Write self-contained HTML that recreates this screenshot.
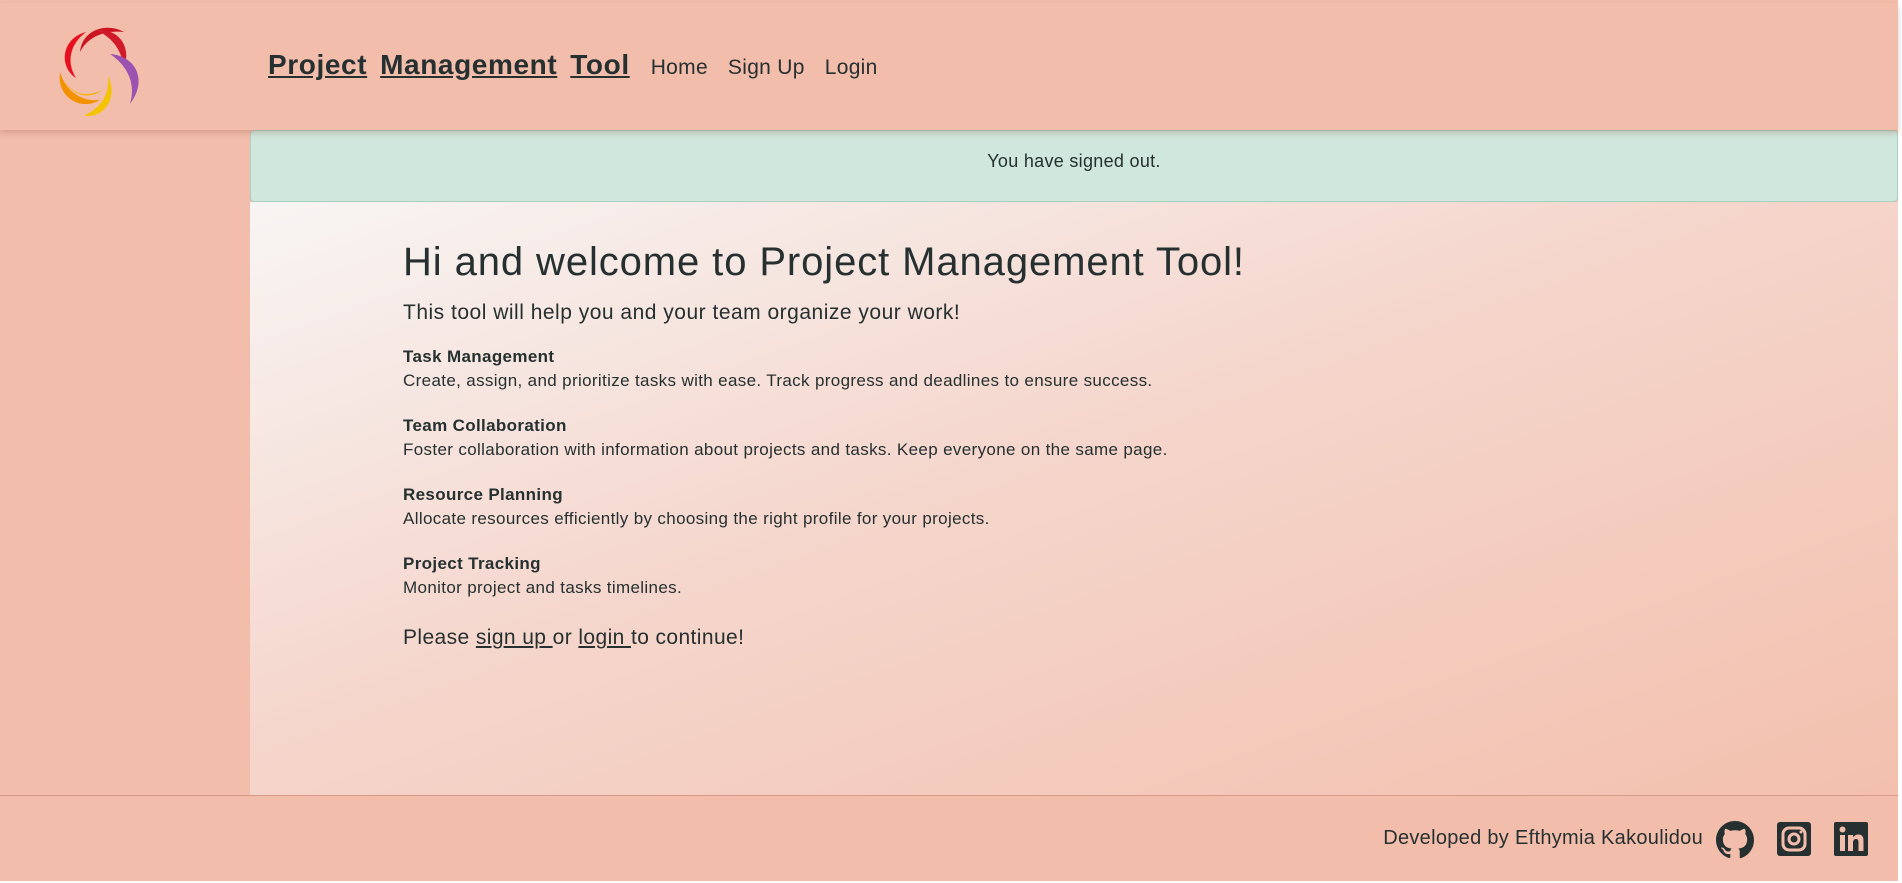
<!DOCTYPE html>
<html><head><meta charset="utf-8"><style>
*{margin:0;padding:0;box-sizing:border-box}
body{width:1902px;height:883px;background:#fff;font-family:"Liberation Sans",sans-serif;color:#263030;position:relative;overflow:hidden}
.page{position:absolute;left:0;top:0;width:1898px;height:881px;background:#f3bdab}
header{position:absolute;left:0;top:3px;width:1898px;height:127px;background:#f3bdab;box-shadow:0 3px 6px rgba(150,90,70,.3);z-index:2}
.nav{position:absolute;top:46px;left:268px;display:flex;align-items:baseline}
.nav a{color:#263030}
.t{font-size:28px;font-weight:bold;text-decoration:underline;margin-right:13px;letter-spacing:.6px}
.l{font-size:21px;margin-left:8px;margin-right:12px;text-decoration:none;letter-spacing:.3px}
.alert{position:absolute;left:250px;top:130px;width:1648px;height:72px;background:#d0e7dd;border:1px solid #a9d0bf;border-radius:4px;text-align:center;line-height:60px;font-size:18px;letter-spacing:.3px}
.main{position:absolute;left:250px;top:202px;width:1648px;height:593px;background:linear-gradient(160deg,#f8f5f4 0%,#f5d6cc 45%,#f3c0ae 100%)}
.c{position:absolute;left:153px;top:38px;letter-spacing:.35px}
h1{font-size:40px;font-weight:normal;margin-bottom:16px;letter-spacing:.9px}
.sub{font-size:21px;margin-bottom:20px;letter-spacing:.5px}
.g{margin-bottom:21px;font-size:17px;line-height:24px}
.g b{font-size:17px}
.please{font-size:21px;margin-top:26px;letter-spacing:.4px}
.please a{color:#263030;text-decoration:underline}
footer{position:absolute;left:0;top:795px;width:1898px;height:86px;border-top:1px solid #d89a88;background:#f3bdab}
.ft{position:absolute;right:195px;top:31px;font-size:20px;letter-spacing:.3px}
.ic{position:absolute;top:25px}
</style></head><body><div class="page">
<header>
<svg style="position:absolute;left:56px;top:21px" width="92" height="92" viewBox="0 0 92 92">
<path d="M30 8 C6 14 2 42 20 54 C10 38 14 20 30 8Z" fill="#e8101f"/>
<path d="M68 8 C50 -2 26 6 24 28 C32 12 50 6 68 8Z" fill="#cc1420"/>
<path d="M40 6 C62 4 76 22 68 44 C66 28 58 14 40 6Z" fill="#d01a2a"/>
<path d="M54 30 C80 32 92 56 74 80 C80 60 72 42 54 30Z" fill="#9b52b0"/>
<path d="M4 48 C0 72 24 88 44 76 C26 78 10 68 4 48Z" fill="#f39200"/>
<path d="M52 52 C62 72 50 94 28 92 C44 84 54 72 52 52Z" fill="#f5c400"/>
<path d="M8 56 C16 72 34 76 46 66 C30 74 16 70 8 56Z" fill="#f7b300"/>
</svg>
<div class="nav"><a class="t">Project</a><a class="t">Management</a><a class="t">Tool</a><a class="l">Home</a><a class="l">Sign Up</a><a class="l">Login</a></div>
</header>
<div class="alert">You have signed out.</div>
<div class="main"><div class="c">
<h1>Hi and welcome to Project Management Tool!</h1>
<div class="sub">This tool will help you and your team organize your work!</div>
<div class="g"><b>Task Management</b><br>Create, assign, and prioritize tasks with ease. Track progress and deadlines to ensure success.</div>
<div class="g"><b>Team Collaboration</b><br>Foster collaboration with information about projects and tasks. Keep everyone on the same page.</div>
<div class="g"><b>Resource Planning</b><br>Allocate resources efficiently by choosing the right profile for your projects.</div>
<div class="g"><b>Project Tracking</b><br>Monitor project and tasks timelines.</div>
<div class="please">Please <a>sign up </a>or <a>login </a>to continue!</div>
</div></div>
<footer>
<div class="ft">Developed by Efthymia Kakoulidou</div>
<svg class="ic" style="left:1716px" width="38" height="38" viewBox="0 0 16 16"><path fill="#263030" d="M8 0C3.58 0 0 3.58 0 8c0 3.54 2.29 6.53 5.470 7.59.4.07.55-.17.55-.38v-1.33c-2.23.48-2.7-1.07-2.7-1.07-.36-.92-.89-1.170-.89-1.17-.73-.5.06-.49.06-.49.8.06 1.23.83 1.23.83.71 1.22 1.87.87 2.33.66.07-.52.28-.87.5-1.07-1.78-.2-3.64-.89-3.64-3.95 0-.87.31-1.59.82-2.15-.08-.2-.36-1.02.08-2.12 0 0 .67-.21 2.2.82a7.6 7.6 0 014 0c1.53-1.04 2.2-.82 2.2-.82.44 1.1.16 1.92.08 2.12.51.56.82 1.27.82 2.15 0 3.07-1.87 3.75-3.65 3.95.29.25.54.73.54 1.48v2.2c0 .21.15.46.55.38A8 8 0 0016 8c0-4.42-3.58-8-8-8z"/></svg>
<svg class="ic" style="left:1777px" width="34" height="36" viewBox="0 0 34 36"><rect x="0" y="1" width="34" height="34" rx="3" fill="#263030"/><rect x="6" y="7" width="22" height="22" rx="6" fill="none" stroke="#f3bdab" stroke-width="3"/><circle cx="17" cy="18" r="5" fill="none" stroke="#f3bdab" stroke-width="3"/><circle cx="24" cy="11" r="1.5" fill="#f3bdab"/></svg>
<svg class="ic" style="left:1834px" width="34" height="36" viewBox="0 0 34 36"><rect x="0" y="1" width="34" height="34" rx="2" fill="#263030"/><rect x="6" y="14" width="5" height="16" fill="#f3bdab"/><circle cx="8.5" cy="8.5" r="3" fill="#f3bdab"/><path d="M14 14h5v2.5c1-1.8 3-3 5.5-3 3.5 0 5 2 5 6V30h-5v-9c0-2-.8-3-2.5-3s-3 1.2-3 3.5V30h-5z" fill="#f3bdab"/></svg>
</footer>
</div></body></html>
